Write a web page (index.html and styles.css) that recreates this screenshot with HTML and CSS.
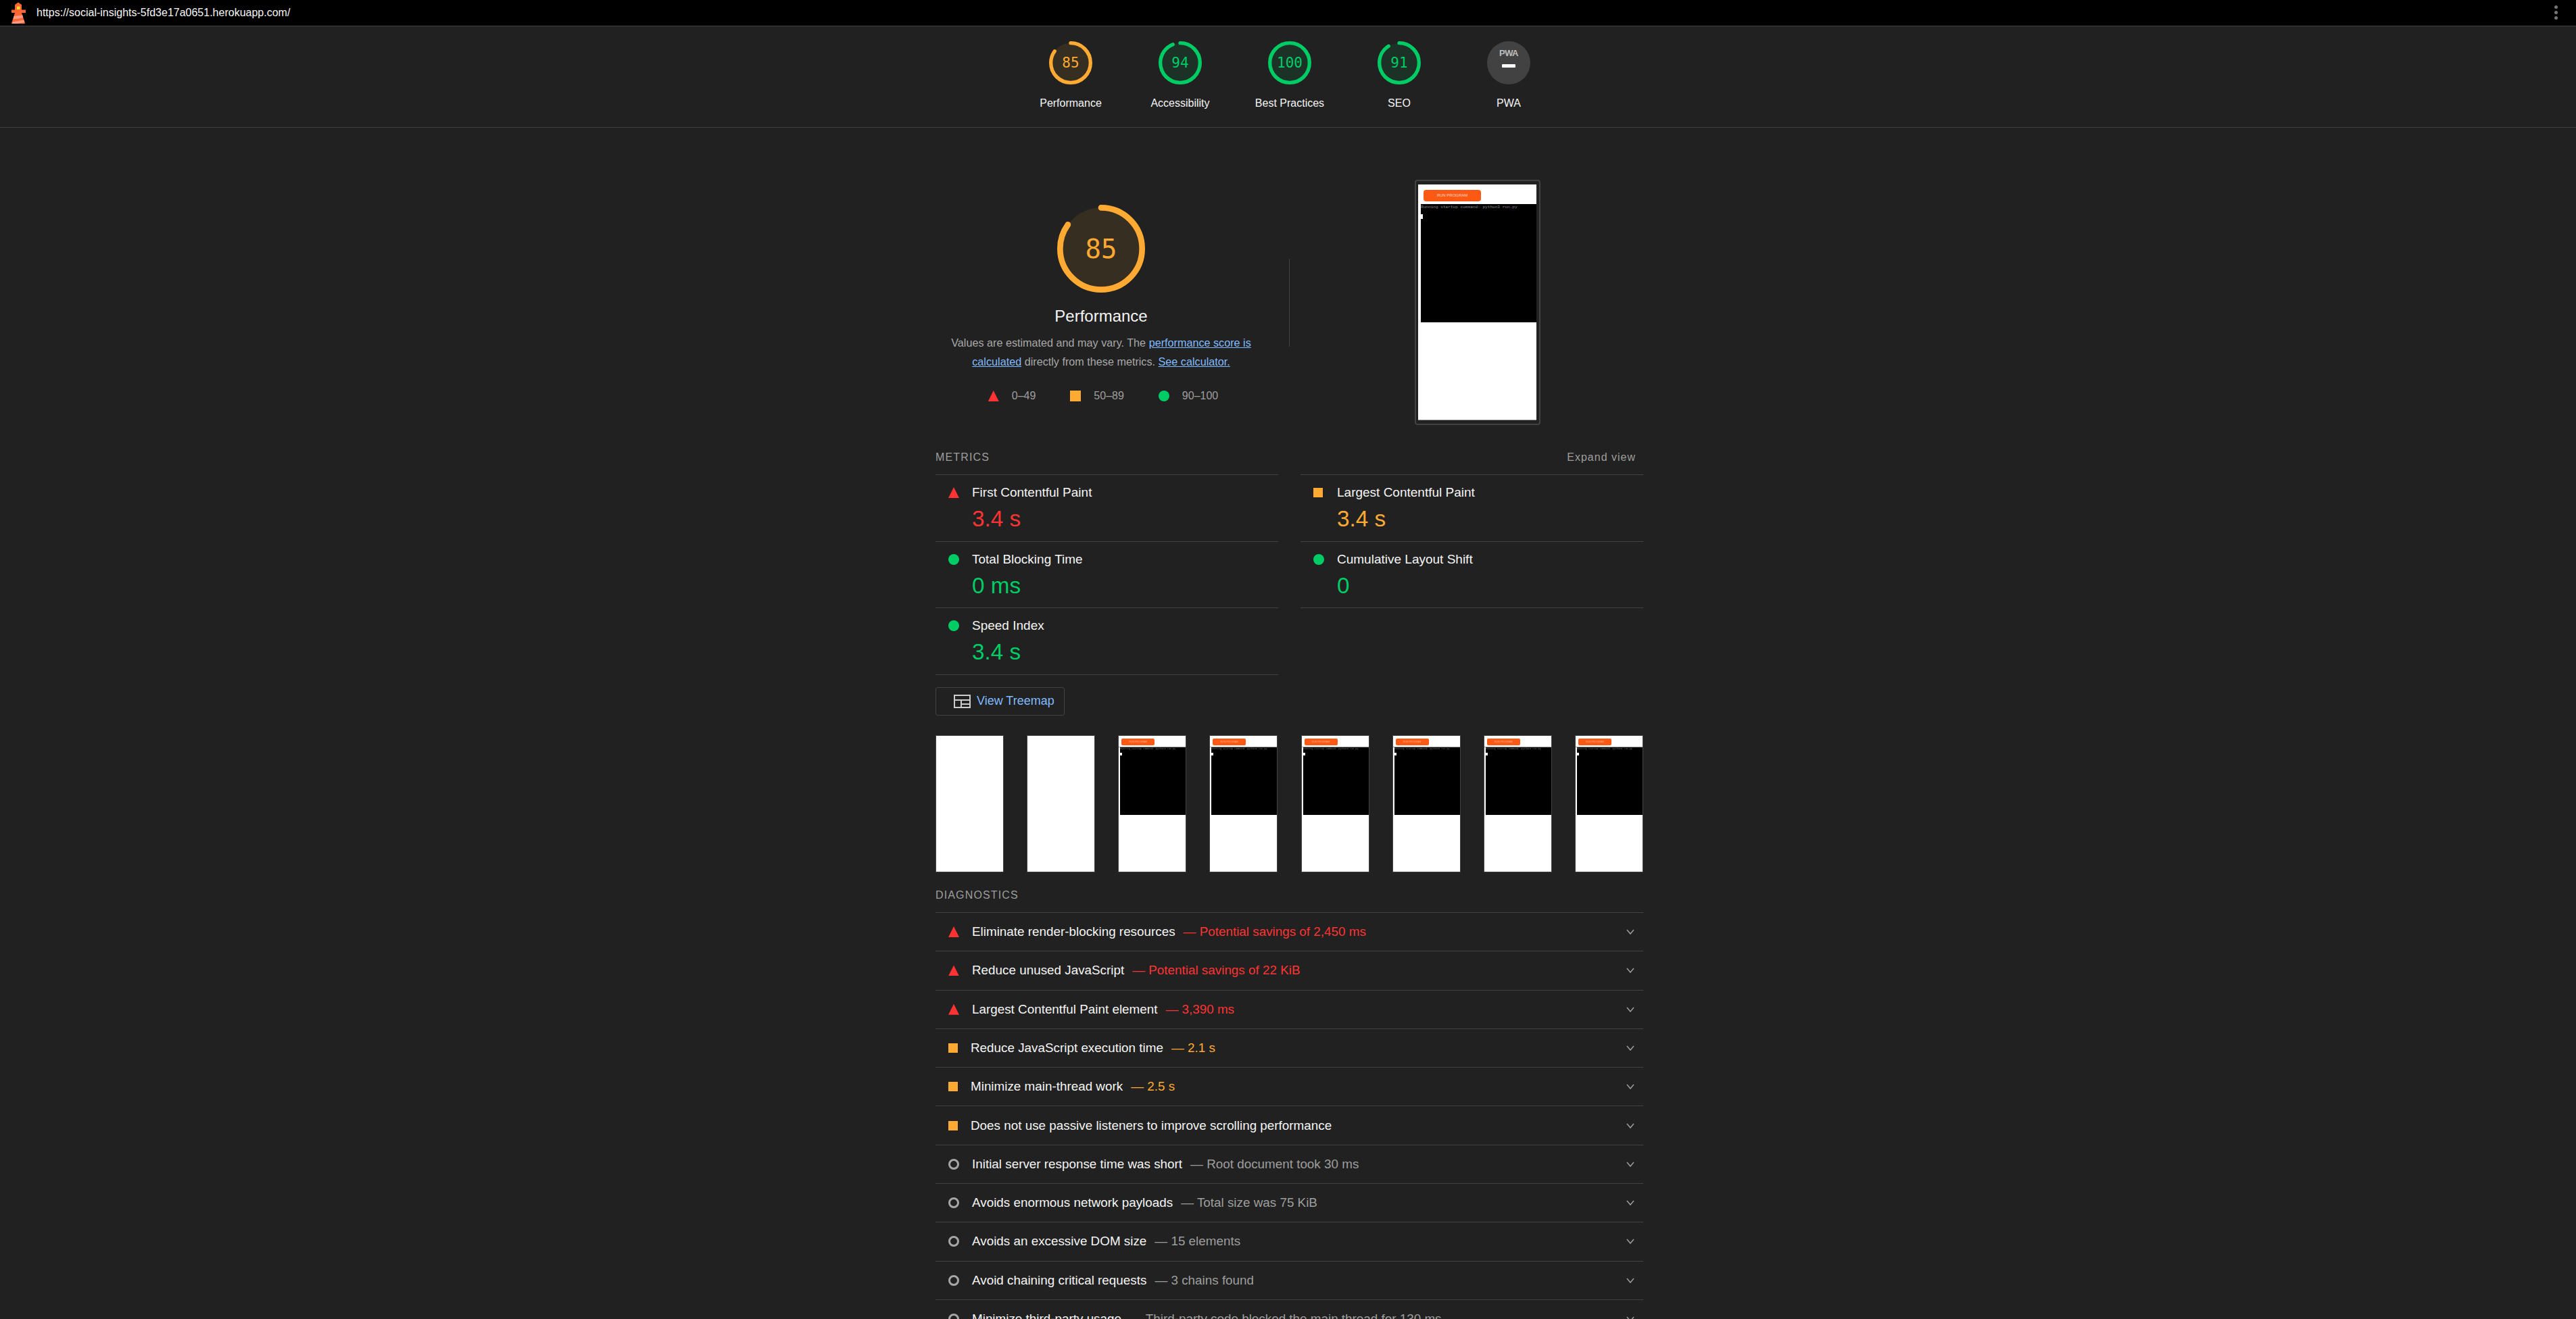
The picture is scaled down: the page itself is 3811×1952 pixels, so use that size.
FILE: index.html
```html
<!DOCTYPE html>
<html lang="en">
<head>
  <meta charset="UTF-8" />
  <title>Lighthouse Report</title>
  <link rel="stylesheet" href="styles.css">
</head>
<body>

  <header class="topbar">
    <svg class="logo" viewBox="0 0 21 32">
      <polygon fill="#f63" points="5,4 10,0.5 15,4 15,12 5,12" />
      <rect fill="#fd3" x="8" y="6.5" width="4.5" height="4.5" />
      <rect fill="#f63" x="0" y="11.5" width="21" height="4.5" />
      <polygon fill="#f63" points="5,16 15,16 20,32 0,32" />
      <polygon fill="#ff9a80" points="3.6,21 16.4,19.5 17.4,23.5 2.4,25.5" />
      <polygon fill="#ff9a80" points="1.5,29.5 18.5,26.5 19.5,30 8,32 1,32" />
    </svg>
    <span class="url">https://social-insights-5fd3e17a0651.herokuapp.com/</span>
    <span class="dots"><i></i><i></i><i></i></span>
  </header>

  <nav class="scores">
    <div class="score-item">
      <div class="gauge gauge-small avg">
        <svg viewBox="0 0 120 120"><circle class="base" cx="60" cy="60" r="55" /><circle class="arc" cx="60" cy="60" r="55" pathLength="100" stroke-dasharray="85 100" /></svg>
        <span class="gauge-num">85</span>
      </div>
      <div class="score-label">Performance</div>
    </div>
    <div class="score-item">
      <div class="gauge gauge-small pass">
        <svg viewBox="0 0 120 120"><circle class="base" cx="60" cy="60" r="55" /><circle class="arc" cx="60" cy="60" r="55" pathLength="100" stroke-dasharray="94 100" /></svg>
        <span class="gauge-num">94</span>
      </div>
      <div class="score-label">Accessibility</div>
    </div>
    <div class="score-item">
      <div class="gauge gauge-small pass">
        <svg viewBox="0 0 120 120"><circle class="base" cx="60" cy="60" r="55" /><circle class="arc" cx="60" cy="60" r="55" pathLength="100" stroke-dasharray="100 100" /></svg>
        <span class="gauge-num">100</span>
      </div>
      <div class="score-label">Best Practices</div>
    </div>
    <div class="score-item">
      <div class="gauge gauge-small pass">
        <svg viewBox="0 0 120 120"><circle class="base" cx="60" cy="60" r="55" /><circle class="arc" cx="60" cy="60" r="55" pathLength="100" stroke-dasharray="91 100" /></svg>
        <span class="gauge-num">91</span>
      </div>
      <div class="score-label">SEO</div>
    </div>
    <div class="score-item">
      <div class="pwa-badge">
        <span class="pwa-text">PWA</span>
        <span class="pwa-dash"></span>
      </div>
      <div class="score-label">PWA</div>
    </div>
  </nav>

  <main class="report">

    <section class="summary">
      <div class="summary-left">
        <div class="gauge gauge-big avg">
          <svg viewBox="0 0 120 120"><circle class="base" cx="60" cy="60" r="56" /><circle class="arc" cx="60" cy="60" r="56" pathLength="100" stroke-dasharray="85 100" /></svg>
          <span class="gauge-num">85</span>
        </div>
        <h1 class="summary-title">Performance</h1>
        <p class="summary-desc">Values are estimated and may vary. The <a href="#">performance score is</a> <a href="#">calculated</a> directly from these metrics. <a href="#">See calculator.</a></p>
        <div class="legend">
          <span class="legend-item"><i class="icon-fail"></i>0–49</span>
          <span class="legend-item"><i class="icon-avg legend-square"></i>50–89</span>
          <span class="legend-item"><i class="icon-pass"></i>90–100</span>
        </div>
      </div>
      <div class="summary-divider"></div>
      <div class="shot-frame">
        <div class="screen">
          <div class="screen-head"><span class="run-btn">RUN PROGRAM</span></div>
          <div class="terminal">
            <div class="terminal-line">Running startup command: python3 run.py</div>
            <div class="cursor"></div>
          </div>
        </div>
      </div>
    </section>

    <div class="section-head">
      <span>METRICS</span>
      <span class="expand">Expand view</span>
    </div>

    <section class="metrics">
      <div class="metric-col">
        <div class="metric">
          <div class="metric-title"><i class="icon-fail"></i>First Contentful Paint</div>
          <div class="metric-value red">3.4 s</div>
        </div>
        <div class="metric">
          <div class="metric-title"><i class="icon-pass"></i>Total Blocking Time</div>
          <div class="metric-value green">0 ms</div>
        </div>
        <div class="metric">
          <div class="metric-title"><i class="icon-pass"></i>Speed Index</div>
          <div class="metric-value green">3.4 s</div>
        </div>
      </div>
      <div class="metric-col">
        <div class="metric">
          <div class="metric-title"><i class="icon-avg metric-square"></i>Largest Contentful Paint</div>
          <div class="metric-value orange">3.4 s</div>
        </div>
        <div class="metric">
          <div class="metric-title"><i class="icon-pass"></i>Cumulative Layout Shift</div>
          <div class="metric-value green">0</div>
        </div>
      </div>
    </section>

    <a class="treemap-btn" href="#">
      <svg class="treemap-icon" viewBox="0 0 25 20">
        <path fill="#ccc" fill-rule="evenodd" d="M0 0h25v20H0z M2 2v5h21V2z M2 9v9h8V9z M12 9v4h11V9z M12 15v3h11v-3z" />
      </svg>
      View Treemap
    </a>

    <section class="filmstrip">
      <div class="film-frame"></div>
      <div class="film-frame"></div>
      <div class="film-frame">
        <div class="film-head"><span class="film-btn">RUN PROGRAM</span></div>
        <div class="film-term"><div class="film-line">Running startup command: python3 run.py</div><div class="film-cursor"></div></div>
      </div>
      <div class="film-frame">
        <div class="film-head"><span class="film-btn">RUN PROGRAM</span></div>
        <div class="film-term"><div class="film-line">Running startup command: python3 run.py</div><div class="film-cursor"></div></div>
      </div>
      <div class="film-frame">
        <div class="film-head"><span class="film-btn">RUN PROGRAM</span></div>
        <div class="film-term"><div class="film-line">Running startup command: python3 run.py</div><div class="film-cursor"></div></div>
      </div>
      <div class="film-frame">
        <div class="film-head"><span class="film-btn">RUN PROGRAM</span></div>
        <div class="film-term"><div class="film-line">Running startup command: python3 run.py</div><div class="film-cursor"></div></div>
      </div>
      <div class="film-frame">
        <div class="film-head"><span class="film-btn">RUN PROGRAM</span></div>
        <div class="film-term"><div class="film-line">Running startup command: python3 run.py</div><div class="film-cursor"></div></div>
      </div>
      <div class="film-frame">
        <div class="film-head"><span class="film-btn">RUN PROGRAM</span></div>
        <div class="film-term"><div class="film-line">Running startup command: python3 run.py</div><div class="film-cursor"></div></div>
      </div>
    </section>

    <div class="section-head diag-head">
      <span>DIAGNOSTICS</span>
    </div>

    <section class="audits">
      <div class="audit"><i class="icon-fail"></i><span class="audit-title">Eliminate render-blocking resources</span><span class="audit-detail red">— Potential savings of 2,450 ms</span><svg class="chevron" viewBox="0 0 12 8"><path d="M1 1l5 6 5-6" /></svg></div>
      <div class="audit"><i class="icon-fail"></i><span class="audit-title">Reduce unused JavaScript</span><span class="audit-detail red">— Potential savings of 22 KiB</span><svg class="chevron" viewBox="0 0 12 8"><path d="M1 1l5 6 5-6" /></svg></div>
      <div class="audit"><i class="icon-fail"></i><span class="audit-title">Largest Contentful Paint element</span><span class="audit-detail red">— 3,390 ms</span><svg class="chevron" viewBox="0 0 12 8"><path d="M1 1l5 6 5-6" /></svg></div>
      <div class="audit"><i class="icon-avg"></i><span class="audit-title">Reduce JavaScript execution time</span><span class="audit-detail orange">— 2.1 s</span><svg class="chevron" viewBox="0 0 12 8"><path d="M1 1l5 6 5-6" /></svg></div>
      <div class="audit"><i class="icon-avg"></i><span class="audit-title">Minimize main-thread work</span><span class="audit-detail orange">— 2.5 s</span><svg class="chevron" viewBox="0 0 12 8"><path d="M1 1l5 6 5-6" /></svg></div>
      <div class="audit"><i class="icon-avg"></i><span class="audit-title">Does not use passive listeners to improve scrolling performance</span><svg class="chevron" viewBox="0 0 12 8"><path d="M1 1l5 6 5-6" /></svg></div>
      <div class="audit"><i class="icon-info"></i><span class="audit-title">Initial server response time was short</span><span class="audit-detail">— Root document took 30 ms</span><svg class="chevron" viewBox="0 0 12 8"><path d="M1 1l5 6 5-6" /></svg></div>
      <div class="audit"><i class="icon-info"></i><span class="audit-title">Avoids enormous network payloads</span><span class="audit-detail">— Total size was 75 KiB</span><svg class="chevron" viewBox="0 0 12 8"><path d="M1 1l5 6 5-6" /></svg></div>
      <div class="audit"><i class="icon-info"></i><span class="audit-title">Avoids an excessive DOM size</span><span class="audit-detail">— 15 elements</span><svg class="chevron" viewBox="0 0 12 8"><path d="M1 1l5 6 5-6" /></svg></div>
      <div class="audit"><i class="icon-info"></i><span class="audit-title">Avoid chaining critical requests</span><span class="audit-detail">— 3 chains found</span><svg class="chevron" viewBox="0 0 12 8"><path d="M1 1l5 6 5-6" /></svg></div>
      <div class="audit"><i class="icon-info"></i><span class="audit-title">Minimize third-party usage</span><span class="audit-detail">— Third-party code blocked the main thread for 130 ms</span><svg class="chevron" viewBox="0 0 12 8"><path d="M1 1l5 6 5-6" /></svg></div>
    </section>

  </main>

</body>
</html>
```

FILE: styles.css
```css
* {
  box-sizing: border-box;
}

html, body {
  height: 100vh;
  overflow: hidden;
}

body {
  margin: 0;
  background-color: #212121;
  color: #f5f5f5;
  font-family: "Liberation Sans", Arial, sans-serif;
}

a {
  color: #80bbff;
}

/* top bar */
.topbar {
  display: flex;
  align-items: center;
  height: 39px;
  padding: 0 27px 1px 17px;
  background-color: #000;
  border-bottom: 1px solid #424242;
}

.logo {
  width: 21px;
  height: 32px;
  flex-shrink: 0;
}

.url {
  margin-left: 16px;
  font-size: 16px;
  color: #f5f5f5;
}

.dots {
  display: flex;
  flex-direction: column;
  gap: 3px;
  margin-left: auto;
}

.dots i {
  display: block;
  width: 5px;
  height: 5px;
  border-radius: 50%;
  background-color: #757575;
}

/* score bar */
.scores {
  display: flex;
  justify-content: center;
  height: 150px;
  padding: 22px 0 0 5px;
  border-bottom: 1px solid #424242;
}

.score-item {
  width: 162px;
  display: flex;
  flex-direction: column;
  align-items: center;
}

.score-label {
  margin-top: 18px;
  font-size: 16px;
  line-height: 20px;
}

.gauge {
  display: grid;
  place-items: center;
}

.gauge svg,
.gauge-num {
  grid-area: 1 / 1;
}

.gauge svg {
  width: 100%;
  height: 100%;
  transform: rotate(-90deg);
}

.gauge-small {
  width: 64px;
  height: 64px;
}

.gauge-big {
  width: 130px;
  height: 130px;
}

.gauge-num {
  font-family: "DejaVu Sans Mono", monospace;
  font-size: 21px;
}

.gauge-big .gauge-num {
  font-size: 39px;
}

.base {
  stroke: none;
}

.arc {
  fill: none;
  stroke-width: 8;
  stroke-linecap: round;
}

.gauge-small .arc {
  stroke-width: 10;
}

.avg .base { fill: rgba(255, 170, 51, 0.1); }
.avg .arc { stroke: #fa3; }
.avg .gauge-num { color: #fa3; }

.pass .base { fill: rgba(0, 204, 102, 0.1); }
.pass .arc { stroke: #0c6; }
.pass .gauge-num { color: #0c6; }

.pwa-badge {
  width: 64px;
  height: 64px;
  border-radius: 50%;
  background-color: #424242;
  display: flex;
  flex-direction: column;
  align-items: center;
}

.pwa-text {
  margin-top: 10px;
  font-size: 13px;
  line-height: 16px;
  font-weight: bold;
  letter-spacing: -0.6px;
  color: #bdbdbd;
}

.pwa-dash {
  width: 20px;
  height: 5px;
  margin-top: 8px;
  border-radius: 1px;
  background-color: #fff;
}

/* main column */
.report {
  width: 1047px;
  margin: 0 auto;
  position: relative;
  left: 2px;
}

.summary {
  display: flex;
  align-items: flex-start;
  padding-top: 77px;
}

.summary-left {
  width: 490px;
  padding-top: 37px;
  display: flex;
  flex-direction: column;
  align-items: center;
}

.summary-title {
  margin: 20px 0 0;
  font-size: 24px;
  line-height: 30px;
  font-weight: normal;
}

.summary-desc {
  margin: 11px 0 0;
  font-size: 16.2px;
  line-height: 27.5px;
  text-align: center;
  color: #a8a8a8;
}

.legend {
  display: flex;
  gap: 51px;
  margin: 27px 0 0 6px;
  font-size: 16px;
  line-height: 20px;
  color: #9e9e9e;
}

.legend-item {
  display: flex;
  align-items: center;
  gap: 19px;
}

.summary-divider {
  width: 1px;
  height: 130px;
  margin: 117px 0 0 33px;
  background-color: #424242;
}

/* status icons */
.icon-fail,
.icon-avg,
.icon-pass,
.icon-info {
  display: block;
  flex-shrink: 0;
}

.icon-fail {
  width: 16px;
  height: 16px;
  background-color: #f33;
  clip-path: polygon(50% 0, 100% 100%, 0 100%);
}

.icon-avg {
  width: 14px;
  height: 14px;
  background-color: #fa3;
}

.legend-square {
  width: 16px;
  height: 16px;
}

.icon-pass {
  width: 16px;
  height: 16px;
  border-radius: 50%;
  background-color: #0c6;
}

.icon-info {
  width: 16px;
  height: 16px;
  border-radius: 50%;
  border: 3px solid #a6a6a6;
}

.red { color: #f33; }
.orange { color: #fa3; }
.green { color: #0c6; }

/* screenshot on the right */
.shot-frame {
  width: 186px;
  height: 363px;
  margin-left: 185px;
  padding: 5px 4px 5px 3px;
  border: 2px solid #424242;
  border-radius: 4px;
}

.screen {
  height: 100%;
  background-color: #fff;
  border-bottom: 1px solid #999;
}

.screen-head {
  height: 29px;
  padding: 8px 0 0 8px;
}

.run-btn {
  display: block;
  width: 85px;
  height: 17px;
  border-radius: 4px;
  background-color: #fc5a14;
  color: #ffd8c8;
  font-size: 6px;
  line-height: 17px;
  text-align: center;
}

.terminal {
  height: 175px;
  margin-left: 4px;
  padding-top: 1px;
  background-color: #000;
}

.terminal-line {
  font-family: "Liberation Mono", monospace;
  font-size: 6.1px;
  line-height: 7px;
  color: #8a8a8a;
  white-space: nowrap;
}

.cursor {
  width: 3px;
  height: 7px;
  margin-top: 7px;
  background-color: #fff;
}

/* section headers */
.section-head {
  display: flex;
  justify-content: space-between;
  align-items: center;
  height: 50px;
  margin-top: 23px;
  font-size: 16px;
  letter-spacing: 1.15px;
  color: #9e9e9e;
}

.expand {
  margin-right: 11px;
  letter-spacing: 1px;
}

.diag-head {
  margin-top: 9px;
}

/* metrics */
.metrics {
  display: flex;
  align-items: flex-start;
  gap: 33px;
}

.metric-col {
  width: 507px;
  border-top: 1px solid #424242;
}

.metric {
  height: 98.67px;
  padding: 14px 0 0 19px;
  border-bottom: 1px solid #424242;
}

.metric-title {
  display: flex;
  align-items: center;
  font-size: 19px;
  line-height: 24px;
}

.metric-title i {
  margin-right: 19px;
}

.metric-title .metric-square {
  margin-right: 21px;
}

.metric-value {
  margin: 7px 0 0 35px;
  font-size: 33.3px;
  line-height: 40px;
}

/* treemap button */
.treemap-btn {
  display: flex;
  align-items: center;
  width: 191px;
  height: 42px;
  margin-top: 18px;
  padding-left: 26px;
  border: 1px solid #424242;
  border-radius: 3px;
  font-size: 18px;
  text-decoration: none;
}

.treemap-icon {
  width: 25px;
  height: 20px;
  margin-right: 9px;
}

/* filmstrip */
.filmstrip {
  display: flex;
  justify-content: space-between;
  margin-top: 29px;
}

.film-frame {
  width: 101px;
  height: 203px;
  background-color: #fff;
  border: 1px solid #424242;
}

.film-head {
  height: 17px;
  padding: 4px 0 0 4px;
  border-bottom: 1px solid #999;
}

.film-btn {
  display: block;
  width: 49px;
  height: 10px;
  border-radius: 2px;
  background-color: #fc5a14;
  color: #ffb38f;
  font-size: 3.5px;
  line-height: 10px;
  text-align: center;
}

.film-term {
  height: 100px;
  margin-left: 2px;
  background-color: #000;
}

.film-line {
  font-family: "Liberation Mono", monospace;
  font-size: 3.5px;
  line-height: 5px;
  color: #777;
  white-space: nowrap;
}

.film-cursor {
  width: 3px;
  height: 4px;
  margin-top: 3px;
  background-color: #fff;
}

/* diagnostics */
.audits {
  border-top: 1px solid #424242;
}

.audit {
  display: flex;
  align-items: center;
  height: 57.3px;
  padding: 0 13px 0 19px;
  border-bottom: 1px solid #424242;
  font-size: 18.85px;
}

.audit i {
  margin-right: 19px;
}

.audit-detail {
  margin-left: 12px;
}

.audit-detail:not(.red):not(.orange) {
  color: #9e9e9e;
}

.chevron {
  width: 12px;
  height: 8px;
  margin-left: auto;
  fill: none;
  stroke: #9e9e9e;
  stroke-width: 1.5;
}
```
